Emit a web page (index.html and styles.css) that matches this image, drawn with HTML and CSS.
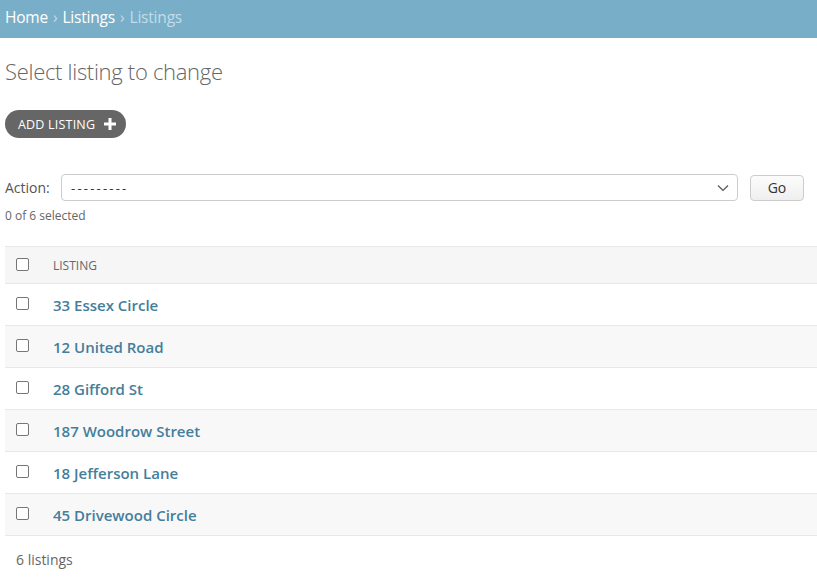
FILE: index.html
```html
<!DOCTYPE html>
<html lang="en">
<head>
<meta charset="utf-8">
<title>Select listing to change</title>
<link rel="stylesheet" href="styles.css">
</head>
<body>
<div class="breadcrumbs">
  <a href="#">Home</a><span class="sep">›</span><a href="#">Listings</a><span class="sep">›</span><span class="current">Listings</span>
</div>
<div class="content">
  <h1>Select listing to change</h1>
  <div class="tools">
    <a href="#" class="addlink">ADD LISTING
      <svg width="12" height="12" viewBox="0 0 12 12"><path d="M4.5 0h3v4.5H12v3H7.5V12h-3V7.5H0v-3h4.5z" fill="#fff"/></svg>
    </a>
  </div>
  <div class="actions">
    <label class="action-label">Action:</label>
    <div class="select">
      <span class="dashes">---------</span>
      <svg width="12" height="8" viewBox="0 0 12 8"><path d="M1 1.5l5 5 5-5" fill="none" stroke="#555" stroke-width="1.2"/></svg>
    </div>
    <button class="go">Go</button>
  </div>
  <div class="counter">0 of 6 selected</div>
  <table class="results">
    <thead>
      <tr><th class="cb"><span class="box"></span></th><th class="col">LISTING</th></tr>
    </thead>
    <tbody>
      <tr><td class="cb"><span class="box"></span></td><td><a href="#">33 Essex Circle</a></td></tr>
      <tr><td class="cb"><span class="box"></span></td><td><a href="#">12 United Road</a></td></tr>
      <tr><td class="cb"><span class="box"></span></td><td><a href="#">28 Gifford St</a></td></tr>
      <tr><td class="cb"><span class="box"></span></td><td><a href="#">187 Woodrow Street</a></td></tr>
      <tr><td class="cb"><span class="box"></span></td><td><a href="#">18 Jefferson Lane</a></td></tr>
      <tr><td class="cb"><span class="box"></span></td><td><a href="#">45 Drivewood Circle</a></td></tr>
    </tbody>
  </table>
  <p class="paginator">6 listings</p>
</div>
</body>
</html>
```

FILE: styles.css
```css
* { box-sizing: border-box; }
body {
  margin: 0;
  font-family: "Open Sans", "Noto Sans", sans-serif;
  color: #333;
  background: #fff;
}
a { text-decoration: none; }
.breadcrumbs {
  background: #79aec8;
  height: 38px;
  display: flex;
  align-items: center;
  padding: 0 0 4px 5px;
  font-size: 15.5px;
  color: #c4dce8;
  letter-spacing: -0.2px;
}
.breadcrumbs a { color: #fff; }
.breadcrumbs .sep { margin: 0 5px; color: #c4dce8; }
.breadcrumbs .current { color: #c4dce8; }
.content { padding: 0 0 0 5px; }
h1 {
  margin: 19px 0 0;
  font-size: 22px;
  font-weight: 300;
  color: #666;
  line-height: 28px;
  letter-spacing: -0.3px;
}
.tools { margin-top: 25px; display: flex; }
.addlink {
  display: flex;
  align-items: center;
  gap: 9px;
  height: 28px;
  padding: 0 10px 0 13px;
  border-radius: 15px;
  background: #666;
  color: #fff;
  font-size: 12.5px;
  letter-spacing: 0.2px;
}
.actions {
  margin-top: 36px;
  display: flex;
  align-items: center;
  height: 27px;
}
.action-label { font-size: 14px; color: #555; width: 56px; }
.select {
  width: 677px;
  height: 27px;
  border: 1px solid #ccc;
  border-radius: 4px;
  display: flex;
  align-items: center;
  justify-content: space-between;
  padding: 0 8px 0 9px;
  font-size: 13px;
  color: #333;
}
.dashes { letter-spacing: 2.2px; }
.go {
  margin-left: 12px;
  width: 54px;
  height: 26px;
  border: 1px solid #ccc;
  border-radius: 4px;
  background: linear-gradient(#fcfcfc, #efefef);
  font-family: inherit;
  font-size: 14px;
  color: #333;
  padding: 0;
}
.counter {
  margin-top: 7px;
  font-size: 12px;
  color: #666;
  line-height: 16px;
}
.results {
  margin-top: 22px;
  width: 100%;
  border-collapse: collapse;
}
.results th, .results td {
  border-top: 1px solid #e8e8e8;
  border-bottom: 1px solid #e8e8e8;
  text-align: left;
  padding: 0;
  vertical-align: middle;
}
.results thead th { background: #f6f6f6; height: 37px; }
.results tbody td { height: 42px; }
.results tbody tr:nth-child(even) td { background: #f8f8f8; }
.results .cb { width: 48px; padding-left: 11px; }
.box {
  display: block;
  width: 13px;
  height: 13px;
  border: 1px solid #767676;
  border-radius: 2px;
  background: #fff;
  margin-top: -2px;
}
.col {
  font-size: 12px;
  font-weight: 400;
  color: #666;
}
.results td a {
  font-size: 15px;
  font-weight: 600;
  color: #447e9b;
  letter-spacing: 0;
}
.paginator {
  margin: 14px 0 0 11px;
  font-size: 14px;
  color: #666;
}
```
